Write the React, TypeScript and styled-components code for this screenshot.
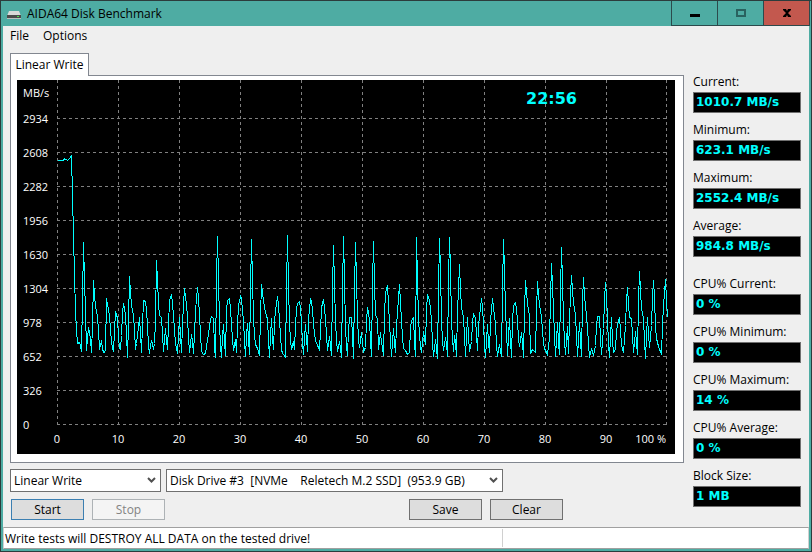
import React from "react";
import styled, { createGlobalStyle, css } from "styled-components";

const GlobalStyle = createGlobalStyle`
  *, *::before, *::after { box-sizing: border-box; }
  body { margin: 0; background: #efefef; }
  button, select { font: inherit; color: inherit; }
`;

const Window = styled.div`
  display: flex;
  flex-direction: column;
  min-height: 100vh;
  border: 1px solid #2c3c3c;
  font: 12px/16px "Open Sans", "Noto Sans", sans-serif;
  color: #000;
`;

const TitleBar = styled.header`
  display: flex;
  height: 25px;
  padding-right: 1px;
  background: #4eaca3;
`;

const Title = styled.h1`
  display: flex;
  flex: 1;
  align-items: center;
  gap: 6px;
  margin: 0;
  padding-left: 6px;
  font-size: 12px;
  font-weight: 400;
`;

const CaptionButton = styled.button<{ $danger?: boolean }>`
  display: grid;
  place-items: center;
  width: ${(p) => (p.$danger ? 47 : 46)}px;
  padding: 0;
  border: 1px solid #2c4a4c;
  border-width: ${(p) => (p.$danger ? "0 1px 1px" : "0 0 1px 1px")};
  background: ${(p) => (p.$danger ? "#c3584e" : "#4eaca3")};
`;

const Body = styled.div`
  display: flex;
  flex: 1;
  flex-direction: column;
  border: 2px solid #4eaca3;
  border-top: 0;
  background: #efefef;
`;

const MenuBar = styled.nav`
  display: flex;
  gap: 14px;
  height: 27px;
  padding: 2px 7px;
`;

const MenuItem = styled.button`
  height: 16px;
  padding: 0;
  border: 0;
  background: none;
`;

const Content = styled.main`
  display: flex;
  flex: 1;
  gap: 9px;
  padding: 0 8px 0 7px;
`;

const Primary = styled.section`
  flex: 1;
  min-width: 0;
`;

const Tab = styled.button`
  display: block;
  position: relative;
  width: 79px;
  height: 23px;
  margin-bottom: -1px;
  padding: 0 0 1px;
  border: 1px solid #828790;
  border-bottom: 0;
  background: #fff;
`;

const Panel = styled.div`
  padding: 4px 8px 8px 6px;
  border: 1px solid #828790;
  background: #fff;
`;

const Plot = styled.svg`
  display: block;
  width: 100%;
  height: auto;
  background: #000;
`;

const AxisLabel = styled.text`
  fill: #fff;
  font-size: 11px;
`;

const Elapsed = styled.text`
  fill: #00ffff;
  font: bold 16px "DejaVu Sans", sans-serif;
`;

const Selectors = styled.div`
  display: flex;
  gap: 5px;
  margin-top: 6px;
`;

const SelectBox = styled.div<{ $width: number }>`
  display: grid;
  align-items: center;
  width: ${(p) => p.$width}px;
  height: 23px;
  border: 1px solid #707070;
  background: #fff;

  > * { grid-area: 1 / 1; }
  > svg { justify-self: end; margin-right: 4px; pointer-events: none; }
`;

const Select = styled.select`
  appearance: none;
  width: 100%;
  height: 21px;
  padding: 0 18px 0 3px;
  border: 0;
  background: transparent;
  white-space: pre;
`;

const Actions = styled.div`
  display: flex;
  justify-content: space-between;
  width: 552px;
  margin: 7px 0 0 1px;
`;

const ActionGroup = styled.div`
  display: flex;
  gap: 8px;
`;

const ActionButton = styled.button<{ $primary?: boolean }>`
  width: 73px;
  height: 21px;
  padding: 0;
  border: 1px solid ${(p) => (p.$primary ? "#3c7fb1" : "#707070")};
  background: #dddddd;

  &:disabled {
    border-color: #adb2b5;
    background: #f4f4f4;
    color: #838383;
  }
`;

const Readings = styled.dl`
  width: 108px;
  margin: 0;
  padding-top: 21px;
`;

const Reading = styled.div<{ $spaced?: boolean }>`
  height: 48px;
  ${(p) => p.$spaced && css`margin-top: 10px;`}
`;

const ReadingLabel = styled.dt`
  height: 18px;
  white-space: nowrap;
`;

const ReadingValue = styled.dd`
  height: 21px;
  margin: 0;
  padding-left: 2px;
  border: 1px solid #707070;
  background: #000;
  color: #00ffff;
  font: bold 12px/19px "DejaVu Sans", sans-serif;
  white-space: nowrap;
`;

const StatusBar = styled.footer`
  display: flex;
  height: 22px;
  border: 1px solid #a0a0a0;
  border-left-color: #d0d0d0;
  border-right-color: #d0d0d0;
  background: #fff;
`;

const StatusText = styled.p`
  width: 499px;
  margin: 1px 0;
  padding: 2px 1px;
  border-right: 1px solid #d0d0d0;
`;

const verticals = [57, 118, 179, 240, 301, 362, 423, 484, 545, 606, 666];
const speeds = [2934, 2608, 2282, 1956, 1630, 1304, 978, 652, 326, 0];

const samples = `57,160 63,160 64,158 67,160 70,157 71,155 72,195 73,235 74,275 75,310 76,330 77,343
79,342 80,345 81,351 82,300 83,242 84,280 85,310 86,350 88,327 89,332 90,339 91,352 92,325 93,280 94,295 95,306
97,316 98,330 99,349 101,340 102,348 103,352 105,351 106,298 107,304 108,309 109,315 110,330 111,340 112,348
113,351 114,330 115,311 116,314 117,318 118,337 119,348 120,349 121,335 122,313 123,303 124,308 125,315 126,333
127,357 128,323 129,276 130,292 131,305 133,315 134,330 135,349 136,343 138,327 139,317 140,333 141,352 142,325
143,300 145,301 146,310 147,325 148,345 149,353 150,345 151,340 152,344 153,349 154,343 155,320 156,260 157,280
158,303 159,315 161,317 162,333 163,351 165,328 166,340 167,349 168,325 169,300 171,294 172,303 173,315 174,330
175,343 176,348 177,353 178,335 179,317 180,335 181,352 182,325 183,303 184,288 185,297 186,303 187,317 188,337
189,352 191,334 192,341 193,353 194,333 195,310 197,287 198,297 199,315 200,333 201,351 203,354 205,353 206,346
208,333 210,319 211,316 213,318 214,347 215,357 216,280 217,236 218,277 219,323 220,345 221,357 222,335 223,324
224,342 225,355 226,310 227,300 229,298 230,308 231,325 232,338 233,350 235,339 236,352 237,325 238,305 240,296
241,298 242,310 243,320 244,340 245,356 246,335 247,323 248,338 249,354 250,290 251,239 252,280 253,317 254,335
255,344 257,348 259,355 260,315 261,284 262,293 263,300 264,307 266,316 267,318 268,340 269,357 270,335 271,318
272,337 273,349 274,322 275,310 277,296 278,305 279,320 280,335 281,349 282,353 284,355 285,357 286,290 287,235
288,285 289,323 290,340 291,349 293,341 294,349 295,325 296,309 297,303 299,301 300,308 301,322 302,342 303,354
304,337 305,324 306,338 307,351 308,318 310,299 311,301 312,309 313,323 314,333 315,340 317,345 319,349 320,330
321,307 323,299 324,308 325,318 326,335 327,350 329,336 330,345 331,355 332,290 333,245 334,285 335,320 336,340
337,351 339,341 340,347 341,357 342,290 343,236 344,280 345,327 346,345 347,355 348,330 349,317 351,317 352,335
353,358 354,290 355,242 356,280 357,317 358,340 359,347 361,332 362,342 363,351 365,347 366,320 367,307 368,312
369,320 370,340 371,356 372,285 373,241 374,283 375,315 377,318 378,349 380,332 381,342 382,347 383,355 384,313
385,292 387,285 388,303 389,323 390,340 391,356 393,328 394,343 395,352 396,325 397,312 399,284 400,303 401,320
402,337 403,348 405,350 407,354 409,352 410,328 411,320 413,317 414,342 415,356 416,237 417,280 418,318 419,335
420,346 421,352 423,331 424,338 425,344 426,310 427,294 429,300 430,309 431,320 432,342 433,356 435,339 437,358
438,290 439,238 440,270 441,320 442,340 443,350 445,337 446,343 447,356 448,280 449,237 450,270 451,320 452,338
453,351 454,335 455,342 456,356 457,310 458,290 459,264 460,290 461,307 463,317 464,335 465,356 467,317 468,335
469,351 471,341 472,322 473,313 475,318 476,335 477,350 478,325 480,307 481,298 482,307 483,323 484,345 485,357
487,324 488,342 489,352 490,320 492,298 493,307 495,323 496,345 497,356 499,344 501,356 502,290 503,239 504,270
505,310 506,330 507,355 509,318 510,340 511,357 512,320 513,305 515,302 516,308 517,320 518,338 519,346 521,332
522,342 523,357 524,310 525,280 526,292 527,303 529,315 530,353 532,349 535,352 536,310 537,281 538,295 539,304
541,317 542,330 543,343 544,348 547,354 549,338 550,300 551,263 552,285 553,310 554,335 555,356 557,322 558,343
559,354 560,290 561,247 562,280 563,320 564,340 565,354 567,326 568,353 569,320 570,295 571,275 572,290 573,302
575,315 576,335 577,356 579,322 580,340 581,356 582,300 583,277 584,296 586,315 587,328 588,343 589,357 591,348
593,355 595,345 596,325 597,316 599,316 600,338 601,354 603,328 604,300 605,282 606,295 607,320 608,343 609,357
611,317 612,340 613,352 615,349 616,330 618,320 619,317 620,330 621,345 623,352 625,325 626,300 627,287 628,303
629,317 631,318 632,335 633,352 635,331 637,354 638,300 639,271 640,290 641,308 643,318 644,340 645,358 646,335
647,317 648,334 649,347 651,325 652,297 653,280 654,297 655,327 656,338 658,346 661,354 662,325 663,305 665,279
666,300 667,317`;

const readings = [
  { label: "Current:", value: "1010.7 MB/s" },
  { label: "Minimum:", value: "623.1 MB/s" },
  { label: "Maximum:", value: "2552.4 MB/s" },
  { label: "Average:", value: "984.8 MB/s" },
  { label: "CPU% Current:", value: "0 %", spaced: true },
  { label: "CPU% Minimum:", value: "0 %" },
  { label: "CPU% Maximum:", value: "14 %" },
  { label: "CPU% Average:", value: "0 %" },
  { label: "Block Size:", value: "1 MB" },
];

function DriveIcon() {
  return (
    <svg width="14" height="14" viewBox="0 0 14 14" aria-hidden="true">
      <path d="M2 4h10l2 5H0z" fill="#d9d9d9" />
      <path d="M0 8h14v4H0z" fill="#4a4a4a" />
      <path d="M0 11h14v1H0z" fill="#bdbdbd" />
      <path d="M10 9h2v1h-2z" fill="#4be04b" />
    </svg>
  );
}

function Chevron() {
  return (
    <svg width="9" height="7" viewBox="0 0 9 7" aria-hidden="true">
      <path d="M1 1l3.500 3.500L8 1" fill="none" stroke="#505050" strokeWidth="2" />
    </svg>
  );
}

function SpeedPlot() {
  return (
    <Plot viewBox="17 80 658 374" role="img" aria-label="Linear write speed">
      <g stroke="#808080" strokeDasharray="3 3" shapeRendering="crispEdges">
        {verticals.map((x) => (
          <path key={x} d={`M${x + 0.5} 80V425`} />
        ))}
        {speeds.map((speed, i) => (
          <path key={speed} d={`M57 ${118.5 + i * 34}H667`} />
        ))}
      </g>
      <polyline
        points={samples}
        transform="translate(.5 .5)"
        fill="none"
        stroke="#00ffff"
        shapeRendering="crispEdges"
      />
      <AxisLabel x="23" y="97">MB/s</AxisLabel>
      {speeds.map((speed, i) => (
        <AxisLabel key={speed} x="23" y={123 + i * 34}>{speed}</AxisLabel>
      ))}
      {verticals.slice(0, 10).map((x, i) => (
        <AxisLabel key={x} x={x} y="443" textAnchor="middle">{i * 10}</AxisLabel>
      ))}
      <AxisLabel x="666" y="443" textAnchor="end">100 %</AxisLabel>
      <Elapsed x="526" y="104">22:56</Elapsed>
    </Plot>
  );
}

export default function App() {
  return (
    <Window>
      <GlobalStyle />
      <TitleBar>
        <Title><DriveIcon />AIDA64 Disk Benchmark</Title>
        <CaptionButton aria-label="Minimize">
          <svg width="10" height="9" viewBox="0 0 10 9"><path d="M0 5h10v3H0z" /></svg>
        </CaptionButton>
        <CaptionButton aria-label="Maximize">
          <svg width="10" height="8" viewBox="0 0 10 8">
            <path d="M1 1h8v6H1z" fill="none" stroke="#29625f" strokeWidth="2" />
          </svg>
        </CaptionButton>
        <CaptionButton aria-label="Close" $danger>
          <svg width="10" height="8" viewBox="0 0 10 8">
            <path d="M1 0h3l1 2 1-2h3v1L6 4l3 3v1H6L5 6 4 8H1V7l3-3-3-3z" />
          </svg>
        </CaptionButton>
      </TitleBar>
      <Body>
        <MenuBar>
          <MenuItem>File</MenuItem>
          <MenuItem>Options</MenuItem>
        </MenuBar>
        <Content>
          <Primary>
            <Tab role="tab" aria-selected="true">Linear Write</Tab>
            <Panel role="tabpanel"><SpeedPlot /></Panel>
            <Selectors>
              <SelectBox $width={151}>
                <Select aria-label="Test"><option>Linear Write</option></Select>
                <Chevron />
              </SelectBox>
              <SelectBox $width={337}>
                <Select aria-label="Drive">
                  <option>{"Disk Drive #3\u00a0 [NVMe\u00a0\u00a0\u00a0 Reletech M.2 SSD]\u00a0 (953.9 GB)"}</option>
                </Select>
                <Chevron />
              </SelectBox>
            </Selectors>
            <Actions>
              <ActionGroup>
                <ActionButton $primary>Start</ActionButton>
                <ActionButton disabled>Stop</ActionButton>
              </ActionGroup>
              <ActionGroup>
                <ActionButton>Save</ActionButton>
                <ActionButton>Clear</ActionButton>
              </ActionGroup>
            </Actions>
          </Primary>
          <Readings>
            {readings.map((r) => (
              <Reading key={r.label} $spaced={r.spaced}>
                <ReadingLabel>{r.label}</ReadingLabel>
                <ReadingValue>{r.value}</ReadingValue>
              </Reading>
            ))}
          </Readings>
        </Content>
        <StatusBar>
          <StatusText>Write tests will DESTROY ALL DATA on the tested drive!</StatusText>
        </StatusBar>
      </Body>
    </Window>
  );
}
